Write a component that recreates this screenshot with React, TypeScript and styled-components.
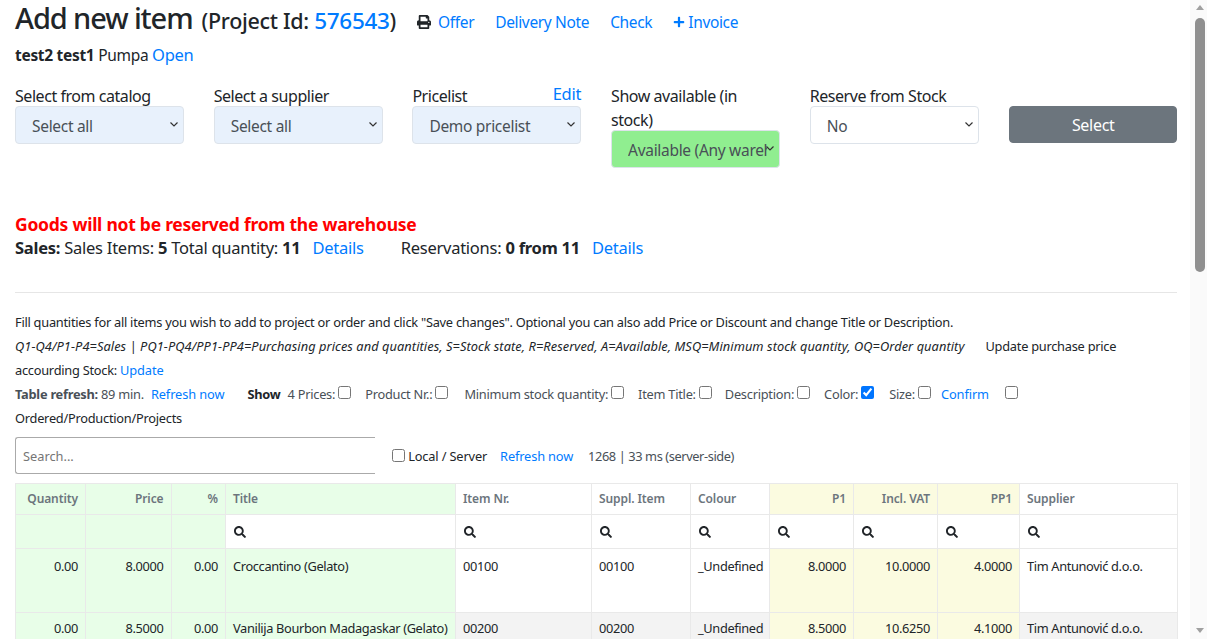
import React from "react";
import styled, { createGlobalStyle } from "styled-components";
import { FaPrint, FaPlus, FaSearch } from "react-icons/fa";

const Global = createGlobalStyle`
  body {
    margin: 0;
    font-family: "Noto Sans", "Open Sans", Arial, sans-serif;
    font-size: 16px;
    line-height: 24px;
    color: #212529;
    background: #fff;
  }
  a { color: #007bff; text-decoration: none; }
`;

const Page = styled.div`
  box-sizing: border-box;
  padding: 0 30px 0 15px;
`;

const ScrollBar = styled.div`
  position: fixed;
  top: 0;
  right: 0;
  bottom: 0;
  box-sizing: border-box;
  width: 17px;
  padding-left: 2px;
  display: flex;
  flex-direction: column;
  align-items: center;
  background: #fafafa;
`;
const ArrowUp = styled.div`
  flex: none;
  width: 0;
  height: 0;
  margin: 5px 0 7px;
  border-left: 4px solid transparent;
  border-right: 4px solid transparent;
  border-bottom: 5px solid #a0a0a0;
`;
const ArrowDown = styled.div`
  flex: none;
  width: 0;
  height: 0;
  margin: auto 0 6px;
  border-left: 4px solid transparent;
  border-right: 4px solid transparent;
  border-top: 5px solid #a0a0a0;
`;
const Thumb = styled.div`
  flex: none;
  width: 10px;
  height: 254px;
  margin-top: 1px;
  border-radius: 5px;
  background: #8f8f8f;
`;

const TitleRow = styled.div`
  display: flex;
  align-items: baseline;
  height: 37px;
`;
const H1 = styled.h1`
  margin: 0;
  font-size: 29px;
  line-height: 35px;
  font-weight: 500;
  letter-spacing: -1.1px;
  white-space: nowrap;
`;
const ProjectId = styled.span`
  font-size: 21.5px;
  margin-left: 9px;
  letter-spacing: -0.3px;
`;
const BigLink = styled.a`
  font-size: 22.5px;
`;
const TopLinks = styled.div`
  display: flex;
  gap: 21px;
  margin-left: 21px;
  font-size: 15.5px;
  letter-spacing: -0.35px;
  white-space: nowrap;
`;
const IconLink = styled.a`
  display: inline-flex;
  align-items: center;
`;
const PrintIcon = styled(FaPrint)`
  color: #212529;
  font-size: 14px;
  margin-right: 7px;
`;
const PlusIcon = styled(FaPlus)`
  font-size: 12px;
  margin-right: 3px;
`;

const Customer = styled.div`
  margin-top: 6px;
  font-size: 15.5px;
  letter-spacing: -0.3px;
  line-height: 24px;
`;
const OpenLink = styled.a`
  font-size: 16.5px;
`;

const FormRow = styled.div`
  display: grid;
  grid-template-columns: repeat(6, 169px);
  column-gap: 29.7px;
  margin-top: 16px;
  height: 95px;
`;
const Field = styled.div`
  font-size: 16px;
  letter-spacing: -0.45px;
  line-height: 24px;
  min-width: 0;
  display: flex;
  flex-direction: column;
`;
const LabelRow = styled.div`
  display: flex;
  justify-content: space-between;
  align-items: flex-start;
  margin-top: 1px;
  margin-bottom: -2px;
`;
const EditLink = styled.a`
  font-size: 16.5px;
  letter-spacing: -0.2px;
  margin-top: -2px;
`;
const Select = styled.select<{ $bg: string }>`
  appearance: none;
  box-sizing: border-box;
  width: 169px;
  height: 38px;
  padding: 2px 12px 0 16px;
  border: 1px solid #dde3ea;
  border-radius: 4px;
  background-color: ${(p) => p.$bg};
  background-image: url("data:image/svg+xml,%3Csvg xmlns='http://www.w3.org/2000/svg' width='10' height='6'%3E%3Cpath d='M1.5 1.5l3.5 3.5 3.5-3.5' fill='none' stroke='%23333' stroke-width='1.2'/%3E%3C/svg%3E");
  background-repeat: no-repeat;
  background-position: right 4px top 14px;
  color: #495057;
  font: inherit;
  font-size: 15.5px;
  letter-spacing: -0.3px;
`;
const SelectButton = styled.button`
  align-self: start;
  justify-self: end;
  box-sizing: border-box;
  width: 168.5px;
  height: 37px;
  margin-top: 23px;
  border: 1px solid #6c757d;
  border-radius: 4px;
  background: #6c757d;
  color: #fff;
  font: inherit;
  font-size: 16px;
  letter-spacing: -0.3px;
`;

const Warning = styled.div`
  margin-top: 34px;
  color: #ff0000;
  font-size: 17.5px;
  line-height: 24px;
  letter-spacing: -0.25px;
  font-weight: 700;
`;
const Sales = styled.div`
  font-size: 16.5px;
  letter-spacing: -0.25px;
  line-height: 24px;
  white-space: nowrap;
`;
const Gap = styled.span<{ $w: number }>`
  display: inline-block;
  width: ${(p) => p.$w}px;
`;
const Rule = styled.hr`
  margin: 32px 0 17px;
  border: 0;
  border-top: 1px solid #e6e6e6;
`;

const Small = styled.div`
  font-size: 12.8px;
  line-height: 24px;
  letter-spacing: -0.25px;
  white-space: nowrap;
  a { letter-spacing: -0.1px; }
`;
const Legend = styled.i`
  letter-spacing: 0.07px;
`;
const Dim = styled.span`
  color: #495057;
`;
const Meta = styled.span`
  color: #495057;
  letter-spacing: -0.4px;
`;
const Check = styled.input.attrs({ type: "checkbox" })`
  margin: 0 0 0 3px;
  width: 13px;
  height: 13px;
`;

const SearchRow = styled.div`
  display: flex;
  align-items: center;
  margin-top: 7px;
  font-size: 12.8px;
  letter-spacing: -0.15px;
  white-space: nowrap;
`;
const SearchInput = styled.input`
  box-sizing: border-box;
  width: 360px;
  height: 37px;
  padding: 0 7px;
  border: 1px solid #aaa;
  border-right: 0;
  border-radius: 3px 0 0 3px;
  font: inherit;
  color: #495057;
  &::placeholder { color: #757575; }
`;

const Table = styled.table`
  margin-top: 9px;
  width: 1161px;
  table-layout: fixed;
  border-collapse: collapse;
  font-size: 12.8px;
  line-height: 18px;
  letter-spacing: -0.35px;
`;
const Th = styled.th<{ $bg?: string; $right?: boolean }>`
  height: 31px;
  box-sizing: border-box;
  padding: 0 7px;
  border: 1px solid #e9e9e9;
  background: ${(p) => p.$bg ?? "#fff"};
  color: #6c757d;
  font-size: 12px;
  letter-spacing: -0.1px;
  font-weight: 600;
  text-align: ${(p) => (p.$right ? "right" : "left")};
  white-space: nowrap;
`;
const Filter = styled.td<{ $bg?: string }>`
  height: 34px;
  box-sizing: border-box;
  padding: 0 7px 0 8px;
  border: 1px solid #e9e9e9;
  background: ${(p) => p.$bg ?? "#fff"};
`;
const Td = styled.td<{ $bg?: string; $right?: boolean; $h: number; $top: number }>`
  height: ${(p) => p.$h}px;
  box-sizing: border-box;
  padding: ${(p) => p.$top}px 7px 0;
  vertical-align: top;
  border: 1px solid #e9e9e9;
  background: ${(p) => p.$bg ?? "transparent"};
  text-align: ${(p) => (p.$right ? "right" : "left")};
  white-space: nowrap;
  overflow: hidden;
`;
const Row = styled.tr<{ $striped?: boolean }>`
  background: ${(p) => (p.$striped ? "#f3f3f3" : "#fff")};
`;
const SearchIcon = styled(FaSearch)`
  display: block;
  font-size: 12px;
  color: #212529;
`;

const GREEN = "#e8fee8";
const YELLOW = "#fbfbe0";

const widths = [70, 85.5, 54.5, 230, 136, 99, 79, 84, 84, 82, 157.5];
const columns: { label: string; bg?: string; right?: boolean; search?: boolean }[] = [
  { label: "Quantity", bg: GREEN, right: true },
  { label: "Price", bg: GREEN, right: true },
  { label: "%", bg: GREEN, right: true },
  { label: "Title", bg: GREEN, search: true },
  { label: "Item Nr.", search: true },
  { label: "Suppl. Item", search: true },
  { label: "Colour", search: true },
  { label: "P1", bg: YELLOW, right: true, search: true },
  { label: "Incl. VAT", bg: YELLOW, right: true, search: true },
  { label: "PP1", bg: YELLOW, right: true, search: true },
  { label: "Supplier", search: true },
];
const rows = [
  ["0.00", "8.0000", "0.00", "Croccantino (Gelato)", "00100", "00100", "_Undefined", "8.0000", "10.0000", "4.0000", "Tim Antunović d.o.o."],
  ["0.00", "8.5000", "0.00", "Vanilija Bourbon Madagaskar (Gelato)", "00200", "00200", "_Undefined", "8.5000", "10.6250", "4.1000", "Tim Antunović d.o.o."],
];

export default function App() {
  return (
    <Page>
      <Global />
      <ScrollBar>
        <ArrowUp />
        <Thumb />
        <ArrowDown />
      </ScrollBar>
      <TitleRow>
        <H1>
          Add new item
          <ProjectId>(Project Id: <BigLink href="#">576543</BigLink>)</ProjectId>
        </H1>
        <TopLinks>
          <IconLink href="#"><PrintIcon />Offer</IconLink>
          <a href="#">Delivery Note</a>
          <a href="#">Check</a>
          <IconLink href="#"><PlusIcon />Invoice</IconLink>
        </TopLinks>
      </TitleRow>
      <Customer><b>test2 test1</b> Pumpa <OpenLink href="#">Open</OpenLink></Customer>
      <FormRow>
        <Field>
          <LabelRow>Select from catalog</LabelRow>
          <Select $bg="#e8f1fc"><option>Select all</option></Select>
        </Field>
        <Field>
          <LabelRow>Select a supplier</LabelRow>
          <Select $bg="#e8f1fc"><option>Select all</option></Select>
        </Field>
        <Field>
          <LabelRow><span>Pricelist</span><EditLink href="#">Edit</EditLink></LabelRow>
          <Select $bg="#e8f1fc"><option>Demo pricelist</option></Select>
        </Field>
        <Field>
          <LabelRow><span>Show available (in<br />stock)</span></LabelRow>
          <Select $bg="#90ee90"><option>Available (Any warehouse)</option></Select>
        </Field>
        <Field>
          <LabelRow>Reserve from Stock</LabelRow>
          <Select $bg="#fff"><option>No</option></Select>
        </Field>
        <SelectButton>Select</SelectButton>
      </FormRow>
      <Warning>Goods will not be reserved from the warehouse</Warning>
      <Sales>
        <b>Sales:</b> Sales Items: <b>5</b> Total quantity: <b>11</b>
        <Gap $w={12} /><a href="#">Details</a>
        <Gap $w={37} />Reservations: <b>0 from 11</b>
        <Gap $w={12} /><a href="#">Details</a>
      </Sales>
      <Rule />
      <Small>Fill quantities for all items you wish to add to project or order and click "Save changes". Optional you can also add Price or Discount and change Title or Description.</Small>
      <Small>
        <Legend>Q1-Q4/P1-P4=Sales | PQ1-PQ4/PP1-PP4=Purchasing prices and quantities, S=Stock state, R=Reserved, A=Available, MSQ=Minimum stock quantity, OQ=Order quantity</Legend>
        <Gap $w={21} />Update purchase price<br />accourding Stock: <a href="#">Update</a>
      </Small>
      <Small>
        <Dim><b>Table refresh:</b> 89 min.</Dim> <Gap $w={4} /><a href="#">Refresh now</a>
        <Gap $w={23} /><b>Show</b><Gap $w={7} /><Dim>4 Prices:</Dim><Check />
        <Gap $w={14} /><Dim>Product Nr.:</Dim><Check />
        <Gap $w={16} /><Dim>Minimum stock quantity:</Dim><Check />
        <Gap $w={14} /><Dim>Item Title:</Dim><Check />
        <Gap $w={13} /><Dim>Description:</Dim><Check />
        <Gap $w={14} /><Dim>Color:</Dim><Check defaultChecked />
        <Gap $w={15} /><Dim>Size:</Dim><Check />
        <Gap $w={10} /><a href="#">Confirm</a>
        <Gap $w={13} /><Check />
        <br />Ordered/Production/Projects
      </Small>
      <SearchRow>
        <SearchInput placeholder="Search..." />
        <Gap $w={14} /><Check />&nbsp;Local / Server
        <Gap $w={13} /><a href="#">Refresh now</a>
        <Gap $w={15} /><Meta>1268 | 33 ms (server-side)</Meta>
      </SearchRow>
      <Table>
        <colgroup>
          {widths.map((w, i) => <col key={i} width={w} />)}
        </colgroup>
        <thead>
          <tr>
            {columns.map((c) => <Th key={c.label} $bg={c.bg} $right={c.right}>{c.label}</Th>)}
          </tr>
          <tr>
            {columns.map((c) => (
              <Filter key={c.label} $bg={c.search ? undefined : c.bg}>
                {c.search && <SearchIcon />}
              </Filter>
            ))}
          </tr>
        </thead>
        <tbody>
          {rows.map((r, i) => (
            <Row key={i} $striped={i % 2 === 1}>
              {r.map((v, j) => (
                <Td key={j} $h={i === 0 ? 64 : 62} $top={i === 0 ? 8 : 6} $bg={columns[j].bg} $right={columns[j].right}>{v}</Td>
              ))}
            </Row>
          ))}
        </tbody>
      </Table>
    </Page>
  );
}
